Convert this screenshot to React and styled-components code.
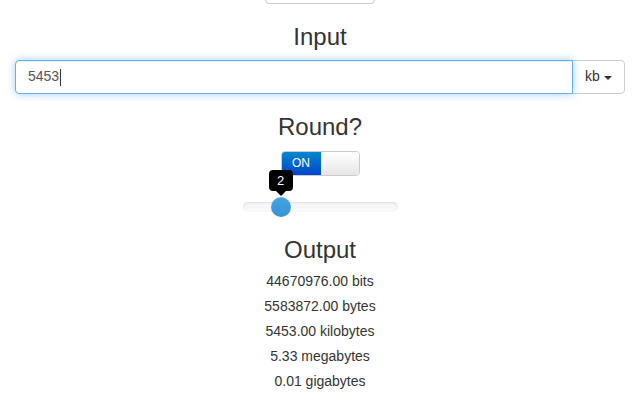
import React from "react";
import styled, { createGlobalStyle } from "styled-components";

const GlobalStyle = createGlobalStyle`
  html, body {
    margin: 0;
    padding: 0;
    background: #fff;
    overflow: hidden;
  }
  body {
    font-family: "Liberation Sans", Arial, sans-serif;
    font-size: 14px;
    line-height: 1.42857;
    color: #333;
  }
`;

const Page = styled.div`
  width: 640px;
  height: 400px;
  box-sizing: border-box;
  padding: 0 15px;
  text-align: center;
  overflow: hidden;
`;

const TopButton = styled.div`
  width: 110px;
  height: 34px;
  margin: -30px auto 0;
  box-sizing: border-box;
  border: 1px solid #ccc;
  border-radius: 4px;
  background: #fff;
`;

const Heading = styled.h3`
  margin: 20px 0 10px;
  font-size: 24px;
  font-weight: 500;
  line-height: 1.1;
  color: #333;
`;

const InputGroup = styled.div`
  display: flex;
  height: 34px;
`;

const TextInput = styled.div`
  flex: 1;
  display: flex;
  align-items: center;
  box-sizing: border-box;
  padding: 6px 12px;
  border: 1px solid #66afe9;
  border-radius: 4px 0 0 4px;
  box-shadow: inset 0 1px 1px rgba(0, 0, 0, 0.075), 0 0 8px rgba(102, 175, 233, 0.6);
  color: #555;
  font-size: 14px;
  text-align: left;
  position: relative;
  z-index: 2;
`;

const Caret = styled.span`
  display: inline-block;
  width: 1px;
  height: 17px;
  margin-left: 1px;
  background: #333;
`;

const DropButton = styled.div`
  width: 53px;
  box-sizing: border-box;
  display: flex;
  align-items: center;
  justify-content: center;
  gap: 4px;
  margin-left: -1px;
  border: 1px solid #ccc;
  border-radius: 0 4px 4px 0;
  background: #fff;
  color: #333;
  font-size: 14px;
`;

const DownArrow = styled.span`
  width: 0;
  height: 0;
  border-left: 4px solid transparent;
  border-right: 4px solid transparent;
  border-top: 4px solid #333;
  margin-top: 1px;
`;

const Switch = styled.div`
  display: flex;
  width: 79px;
  height: 25px;
  margin: 0 auto;
  box-sizing: border-box;
  border: 1px solid #ccc;
  border-radius: 4px;
  overflow: hidden;
`;

const SwitchOn = styled.div`
  width: 39px;
  display: flex;
  align-items: center;
  justify-content: center;
  background: linear-gradient(to bottom, #0088cc, #0044cc);
  color: #fff;
  font-size: 12px;
`;

const SwitchOff = styled.div`
  flex: 1;
  background: linear-gradient(to bottom, #fff, #e6e6e6);
`;

const Slider = styled.div`
  position: relative;
  width: 155px;
  height: 20px;
  margin: 21px auto 0;
`;

const Track = styled.div`
  position: absolute;
  left: 0;
  right: 0;
  top: 5px;
  height: 10px;
  border-radius: 5px;
  background: linear-gradient(to bottom, #f5f5f5, #f9f9f9);
  box-shadow: inset 0 1px 2px rgba(0, 0, 0, 0.1);
`;

const Handle = styled.div`
  position: absolute;
  top: 0;
  width: 20px;
  height: 20px;
  margin-left: -10px;
  border-radius: 50%;
  background: linear-gradient(to bottom, #45a3e0, #3793d4);
  box-shadow: inset 0 1px 0 rgba(255, 255, 255, 0.2), 0 1px 2px rgba(0, 0, 0, 0.05);
`;

const Tooltip = styled.div`
  position: absolute;
  bottom: 26px;
  transform: translateX(-50%);
  min-width: 24px;
  box-sizing: border-box;
  padding: 3px 8px;
  border-radius: 4px;
  background: #000;
  color: #fff;
  font-size: 13px;
  line-height: 15px;
  z-index: 3;

  &::after {
    content: "";
    position: absolute;
    left: 50%;
    bottom: -5px;
    margin-left: -5px;
    border-left: 5px solid transparent;
    border-right: 5px solid transparent;
    border-top: 5px solid #000;
  }
`;

const OutputHeading = styled(Heading)`
  margin-bottom: 8px;
`;

const OutputLine = styled.div`
  line-height: 20px;
  margin-bottom: 5px;
  font-size: 14px;
  color: #333;
`;

const outputs = [
  "44670976.00 bits",
  "5583872.00 bytes",
  "5453.00 kilobytes",
  "5.33 megabytes",
  "0.01 gigabytes",
];

export default function App() {
  const value = 2;
  const pos = 38 / 155;
  return (
    <>
      <GlobalStyle />
      <Page>
        <TopButton />
        <Heading>Input</Heading>
        <InputGroup>
          <TextInput>
            5453<Caret />
          </TextInput>
          <DropButton>
            kb <DownArrow />
          </DropButton>
        </InputGroup>
        <Heading>Round?</Heading>
        <Switch>
          <SwitchOn>ON</SwitchOn>
          <SwitchOff />
        </Switch>
        <Slider>
          <Track />
          <Tooltip style={{ left: `${pos * 100}%` }}>{value}</Tooltip>
          <Handle style={{ left: `${pos * 100}%` }} />
        </Slider>
        <OutputHeading>Output</OutputHeading>
        {outputs.map((o) => (
          <OutputLine key={o}>{o}</OutputLine>
        ))}
      </Page>
    </>
  );
}
